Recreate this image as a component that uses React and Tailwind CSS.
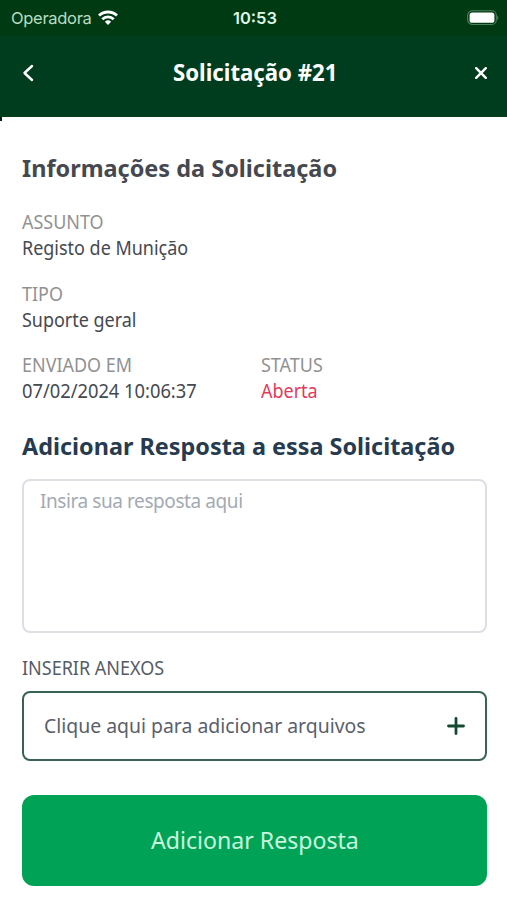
import React, { useState } from 'react';

const StatusBar = () => (
    <div className="h-9 grid grid-cols-3 items-center pl-[11px] pr-2 bg-[#003a12] text-[#dff5e6] font-['Inter','Liberation_Sans',sans-serif]">
        <div className="flex items-center gap-1.5">
            <span className="text-[16.5px] leading-5 tracking-[-0.3px] text-[#b9dcc3]">Operadora</span>
            <svg className="w-5 h-4" viewBox="0 0 20 16" fill="none" stroke="white" strokeWidth="2.8">
                <path d="M1 5.6a13 13 0 0 1 18 0" />
                <path d="M4.3 9.2a8.2 8.2 0 0 1 11.4 0" />
                <path d="M6.9 11.8a4.5 4.5 0 0 1 6.2 0L10 15z" fill="white" stroke="none" />
            </svg>
        </div>
        <span className="text-center text-[16.5px] leading-5 font-semibold">10:53</span>
        <svg className="w-[33px] h-4 justify-self-end" viewBox="0 0 33 16">
            <rect x="1.7" y="0.7" width="28.6" height="13.8" rx="4.5" fill="none" stroke="#4d8060" strokeWidth="1.1" />
            <rect x="3.6" y="2.4" width="24.8" height="10.4" rx="2.6" fill="white" />
            <path d="M31.2 5.5v4.6c1.6-.7 1.6-3.9 0-4.6z" fill="#4d8060" />
        </svg>
    </div>
);

const Field = ({ label, value, valueClass = 'text-[#454950] scale-x-[0.945]' }) => (
    <div className="text-[19px] leading-[26px] whitespace-nowrap">
        <p className="text-[#919191] origin-left scale-x-[0.945]">{label}</p>
        <p className={`origin-left ${valueClass}`}>{value}</p>
    </div>
);

const App = () => {
    const [answer, setAnswer] = useState('');

    return (
        <div className="w-full h-[900px] bg-white overflow-hidden font-['Noto_Sans',sans-serif]">
            <StatusBar />
            <header className="relative h-[81px] px-5 pb-2 flex items-center justify-between bg-[#003d1e] text-white">
                <button className="w-4 h-6 flex items-center justify-center">
                    <svg className="w-4 h-5" viewBox="0 0 16 20" fill="none" stroke="white" strokeWidth="2.4" strokeLinecap="round" strokeLinejoin="round">
                        <path d="M12 3L4.5 10L12 17" />
                    </svg>
                </button>
                <h1 className="text-[23px] scale-x-[0.965] font-bold">Solicitação #21</h1>
                <button className="w-3 h-6 flex items-center justify-center">
                    <svg className="w-3 h-3" viewBox="0 0 12 12" fill="none" stroke="white" strokeWidth="2.4" strokeLinecap="round">
                        <path d="M1.2 1.2L10.8 10.8M10.8 1.2L1.2 10.8" />
                    </svg>
                </button>
                <span className="absolute left-0 top-full w-0.5 h-1 bg-[#002413]" />
            </header>

            <main className="pl-[22px] pr-[20px] pt-[35px]">
                <h2 className="text-[24px] leading-8 origin-left scale-x-[0.978] font-bold text-[#45484f]">Informações da Solicitação</h2>
                <div className="mt-[25px] space-y-[19.5px]">
                    <Field label="ASSUNTO" value="Registo de Munição" />
                    <Field label="TIPO" value="Suporte geral" />
                    <div className="flex">
                        <div className="w-[239px]">
                            <Field label="ENVIADO EM" value="07/02/2024 10:06:37" valueClass="text-[#454950] scale-x-[0.963]" />
                        </div>
                        <Field label="STATUS" value="Aberta" valueClass="text-[#e23a5a] scale-x-[0.945]" />
                    </div>
                </div>

                <h2 className="mt-[26px] text-[24px] leading-8 origin-left scale-x-[0.975] font-bold text-[#263b50] whitespace-nowrap">Adicionar Resposta a essa Solicitação</h2>
                <textarea
                    className="mt-[17px] block w-full h-[154px] px-4 py-[7px] border-2 border-[#dddfe4] rounded-lg resize-none outline-none text-[19px] leading-[26px] tracking-[-0.42px] placeholder:text-[#a3aab4]"
                    placeholder="Insira sua resposta aqui"
                    value={answer}
                    onChange={e => setAnswer(e.target.value)}
                />

                <p className="mt-[22px] text-[19px] leading-[26px] origin-left scale-x-[0.947] text-[#555b67]">INSERIR ANEXOS</p>
                <button className="mt-[9.5px] w-full h-[70.5px] pl-5 pr-5 flex items-center justify-between border-2 border-[#386352] rounded-lg text-[20px] text-[#59606a]">
                    <span className="origin-left scale-x-[0.97]">Clique aqui para adicionar arquivos</span>
                    <svg className="w-[18px] h-[18px]" viewBox="0 0 18 18" fill="none" stroke="#124a31" strokeWidth="2.8" strokeLinecap="round">
                        <path d="M9 1.5V16.5M1.5 9H16.5" />
                    </svg>
                </button>

                <button className="mt-[33.5px] w-full h-[91px] rounded-xl bg-[#00a356] text-[#c9f7df] text-[24px]">
                    <span className="inline-block scale-x-[0.963]">Adicionar Resposta</span>
                </button>
            </main>
        </div>
    );
};

export default App;
